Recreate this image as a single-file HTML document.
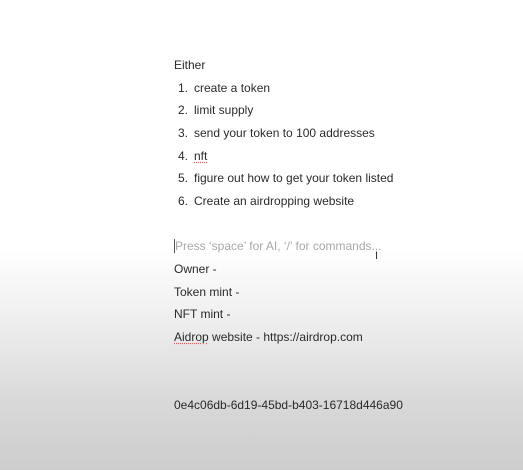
<!DOCTYPE html>
<html><head><style>
body{margin:0;width:523px;height:470px;overflow:hidden;background:linear-gradient(to bottom,#fff 0px,#fff 250px,#ececec 330px,#d9d9d9 400px,#cdcdcd 470px);font-family:"Liberation Sans",sans-serif;font-size:12px;color:#2a2a2a;position:relative}
.t{position:absolute;left:174px;white-space:nowrap;line-height:14px}
.n{position:absolute;left:178px;line-height:14px}
.l{position:absolute;left:194px;white-space:nowrap;line-height:14px}
.u{text-decoration:underline dotted #d66;text-underline-offset:2px}
</style></head><body>
<div class="t" style="top:58px">Either</div>
<div class="n" style="top:81px">1.</div><div class="l" style="top:81px">create a token</div>
<div class="n" style="top:103px">2.</div><div class="l" style="top:103px">limit supply</div>
<div class="n" style="top:126px">3.</div><div class="l" style="top:126px">send your token to 100 addresses</div>
<div class="n" style="top:149px">4.</div><div class="l" style="top:149px"><span class="u">nft</span></div>
<div class="n" style="top:171px">5.</div><div class="l" style="top:171px">figure out how to get your token listed</div>
<div class="n" style="top:194px">6.</div><div class="l" style="top:194px">Create an airdropping website</div>
<div class="t" style="top:239px;color:#a8a8a8;border-left:1px solid #555;padding-left:0">Press ‘space’ for AI, ‘/’ for commands...</div>
<div style="position:absolute;left:375px;top:251px;font-size:11px;color:#333;line-height:11px">I</div>
<div class="t" style="top:262px">Owner -</div>
<div class="t" style="top:285px">Token mint -</div>
<div class="t" style="top:307px">NFT mint -</div>
<div class="t" style="top:330px"><span class="u">Aidrop</span> website - https://airdrop.com</div>
<div class="t" style="top:398px">0e4c06db-6d19-45bd-b403-16718d446a90</div>
</body></html>
